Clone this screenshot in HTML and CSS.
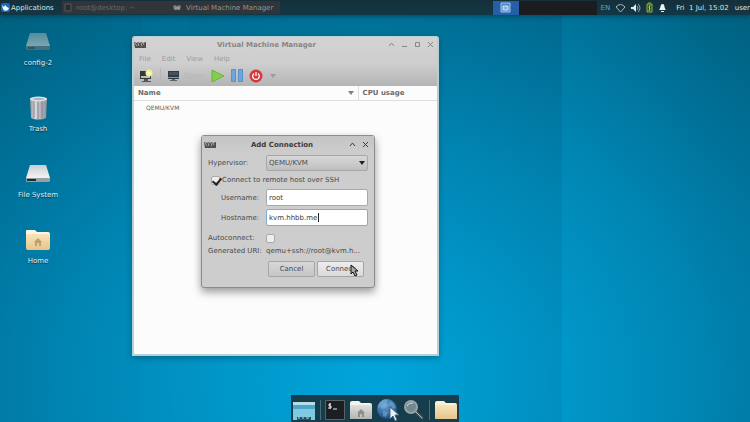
FILE: index.html
```html
<!DOCTYPE html>
<html lang="en">
<head>
<meta charset="utf-8">
<title>Desktop</title>
<link rel="stylesheet" href="styles.css">
</head>
<body>
<svg class="defs" aria-hidden="true">
  <defs>
    <linearGradient id="drive-light" x1="0" y1="0" x2="0" y2="1"><stop offset="0" stop-color="#c9cdd0"/><stop offset="1" stop-color="#f4f4f4"/></linearGradient>
    <linearGradient id="drive-dim" x1="0" y1="0" x2="0" y2="1"><stop offset="0" stop-color="#548d9d"/><stop offset="1" stop-color="#7ba6b2"/></linearGradient>
    <linearGradient id="can" x1="0" y1="0" x2="1" y2="0"><stop offset="0" stop-color="#8f929a"/><stop offset=".3" stop-color="#dcdde1"/><stop offset=".6" stop-color="#b4b6bd"/><stop offset="1" stop-color="#8f929a"/></linearGradient>
    <linearGradient id="folder-tan" x1="0" y1="0" x2="0" y2="1"><stop offset="0" stop-color="#f8e4bc"/><stop offset="1" stop-color="#e6c488"/></linearGradient>
    <linearGradient id="folder-grey" x1="0" y1="0" x2="0" y2="1"><stop offset="0" stop-color="#dfe0de"/><stop offset="1" stop-color="#b4b6b4"/></linearGradient>
    <radialGradient id="globe" cx=".4" cy=".3" r=".8"><stop offset="0" stop-color="#6aa5d8"/><stop offset="1" stop-color="#123f7c"/></radialGradient>
    <symbol id="vmm" viewBox="0 0 12 8"><path d="M0 1l3 1 1-1 2 1 1-1 2 1 3-1v6H1z" fill="#4c4c4c"/><path d="M1 2l2 3M4 2l1 3M7 2l1 3M9 2l1 2" stroke="#adadad"/><path d="M3 6h1M6 6h2M10 6h1" stroke="#8f5656"/></symbol>
    <symbol id="pointer" viewBox="0 0 9 13"><path d="M1 1v9l2-2 2 4 2-1-2-4h3z" stroke-width="1"/></symbol>
  </defs>
</svg>

<div class="desktop">
  <header class="panel">
    <button class="apps"><svg width="9" height="9" viewBox="0 0 9 9"><rect width="9" height="9" rx="2" fill="#1769bd"/><path d="M1 2l2 2 1-2 2 2 2 1-1 2-3 1-2-2z" fill="#fff"/></svg>Applications</button>
    <nav class="tasks" aria-label="Windows">
      <button class="task minimized"><svg width="8" height="10" viewBox="0 0 8 10"><path d="M1 1h6v7H1z" fill="#292c2e" stroke="#555b5e"/></svg>root@desktop: ~</button>
      <button class="task"><svg width="9" height="6" viewBox="0 0 9 6"><path d="M0 1l2-1 2 1 2-1 2 1-1 4H1z" fill="#777b7c"/><path d="M2 3h5" stroke="#afb1b1"/></svg>Virtual Machine Manager</button>
    </nav>
    <div class="workspaces">
      <span class="ws current"><svg width="11" height="11" viewBox="0 0 11 11"><path d="M1 1h9v9H1z" fill="#4c87c8" stroke="#a5c6e8"/><path d="M3 4h5v4H3z" fill="#87b2df" stroke="#d4e4f4"/></svg></span>
      <span class="ws"></span><span class="ws"></span><span class="ws"></span>
    </div>
    <div class="tray">
      <span class="lang">EN</span>
      <svg width="11" height="10" viewBox="0 0 11 10"><path d="M1 4q4.500-5 9 0L5.500 9z" fill="none" stroke="#a9b8bd"/></svg>
      <svg width="10" height="10" viewBox="0 0 10 10"><path d="M0 4h2l3-3v8L2 6H0z" fill="#e4e9ea"/><path d="M6 3q2 2 0 4M7 1q4 4 0 8" fill="none" stroke="#93a5aa"/></svg>
      <svg width="7" height="11" viewBox="0 0 7 11"><path d="M1 2h5v8H1z" fill="#2e4b23" stroke="#89b53c"/><path d="M2 1h3" stroke="#89b53c"/><path d="M4 3L3 6h1L3 9" fill="none" stroke="#b4db65"/></svg>
      <svg width="9" height="10" viewBox="0 0 9 10"><path d="M4 1h1c2 1 1 4 3 6H1c2-2 1-5 3-6z" fill="#f0f3f3"/><path d="M3 8.500h3" stroke="#f0f3f3"/></svg>
      <time>Fri &nbsp;1 Jul, 15:02</time>
      <span>user</span>
    </div>
  </header>

  <main class="workspace">
    <nav class="icons" aria-label="Desktop icons">
      <a href="#config"><svg width="26" height="24" viewBox="0 0 26 24"><path d="M5 3h16l4 13H1z" fill="url(#drive-dim)"/><path d="M1 16h24v3q0 1-2 1H3q-2 0-2-1z" fill="#456f7c"/><path d="M3 18h7" stroke="#23424c"/></svg>config-2</a>
      <a href="#trash"><svg width="26" height="24" viewBox="0 0 26 24"><path d="M5 2h17l-1 20q-8 3-15 0z" fill="url(#can)"/><path d="M9 5v17M13 5v18M17 5v17" stroke="#8c818c"/><ellipse cx="13.500" cy="3" rx="8.500" ry="2.500" fill="#d9e2e7"/><ellipse cx="13.500" cy="3" rx="6" ry="1.200" fill="#a6b7c1"/></svg>Trash</a>
      <a href="#filesystem"><svg width="26" height="24" viewBox="0 0 26 24"><path d="M5 3h16l4 13H1z" fill="url(#drive-light)"/><path d="M1 16h24v3q0 1-2 1H3q-2 0-2-1z" fill="#99a0a2"/><path d="M2 18h9" stroke="#242b2d" stroke-width="2"/></svg>File System</a>
      <a href="#home"><svg width="26" height="24" viewBox="0 0 26 24"><path d="M1 3q0-1 1-1h8l2 2h11q2 0 2 2v14H1z" fill="#fdf4e1"/><path d="M1 6h24v14q0 2-2 2H3q-2 0-2-2z" fill="url(#folder-tan)"/><path d="M13 10l4 4h-1v4h-2v-3h-2v3h-2v-4H9z" fill="#c0a068"/></svg>Home</a>
    </nav>
  </main>

  <section class="window manager" aria-label="Virtual Machine Manager">
    <div class="chrome">
      <div class="titlebar">
        <svg width="12" height="8"><use href="#vmm"/></svg>
        <h1>Virtual Machine Manager</h1>
        <div class="controls">
          <button aria-label="Shade"><svg width="7" height="7" viewBox="0 0 7 7"><path d="M1 5l2.500-3L6 5"/></svg></button>
          <button aria-label="Minimize"><svg width="7" height="7" viewBox="0 0 7 7"><path d="M1 5.500h5"/></svg></button>
          <button aria-label="Maximize"><svg width="7" height="7" viewBox="0 0 7 7"><path d="M1.500 1.500h4v4h-4z"/></svg></button>
          <button aria-label="Close"><svg width="7" height="7" viewBox="0 0 7 7"><path d="M1 1l5 5M6 1L1 6"/></svg></button>
        </div>
      </div>
      <nav class="menubar" aria-label="Menu"><button>File</button><button>Edit</button><button>View</button><button>Help</button></nav>
      <div class="toolbar">
        <button aria-label="New virtual machine"><svg width="14" height="14" viewBox="0 0 14 14"><path d="M1 2h11v8H1z" fill="#33383b"/><path d="M2 7h9v2H2z" fill="#b9bdbf"/><path d="M5 10h4v2h3v1H3v-1h2z" fill="#54585a"/><circle cx="10" cy="4" r="3.500" fill="#f1ee93"/><circle cx="10" cy="4" r="1.500" fill="#fffde0"/></svg></button>
        <span class="rule"></span>
        <button class="open" disabled><svg width="13" height="13" viewBox="0 0 13 13"><path d="M1 2h11v8H1z" fill="#2f3b47"/><path d="M2 3h9v3H2z" fill="#45525e"/><path d="M1 8h11v1H1z" fill="#8e969c"/><path d="M5 10h3v1h2v1H3v-1h2z" fill="#5f6568"/></svg>Open</button>
        <button class="run" aria-label="Run"><svg width="14" height="14" viewBox="0 0 14 14"><path d="M1 1l12 6-12 6z" fill="#81cf4b" stroke="#69b53c"/></svg></button>
        <button class="pause" aria-label="Pause"><svg width="12" height="13" viewBox="0 0 12 13"><path d="M.500.500h4v12h-4zM7.500.500h4v12h-4z" fill="#6ca5df" stroke="#5a90cb"/></svg></button>
        <button class="power" aria-label="Shut down"><svg width="14" height="14" viewBox="0 0 14 14"><circle cx="7" cy="7" r="6.500" fill="#d7373a"/><path d="M5 4.500a3.300 3.300 0 1 0 4 0M7 3v4" fill="none" stroke="#fff" stroke-width="1.300"/></svg></button>
        <button aria-label="Shut down options"><svg width="6" height="4" viewBox="0 0 6 4"><path d="M0 0h6L3 4z" fill="#9c9c9c"/></svg></button>
      </div>
    </div>
    <table class="list">
      <thead><tr><th><span class="sort">Name<svg width="6" height="4" viewBox="0 0 6 4"><path d="M0 0h6L3 4z" fill="#808080"/></svg></span></th><th class="cpu">CPU usage</th></tr></thead>
      <tbody><tr><td>QEMU/KVM</td><td></td></tr></tbody>
    </table>
  </section>

  <form class="window dialog" aria-label="Add Connection">
    <div class="titlebar">
      <svg width="12" height="8"><use href="#vmm"/></svg>
      <h2>Add Connection</h2>
      <div class="controls">
        <button type="button" aria-label="Shade"><svg width="7" height="7" viewBox="0 0 7 7"><path d="M1 5l2.500-3L6 5"/></svg></button>
        <button type="button" aria-label="Close"><svg width="7" height="7" viewBox="0 0 7 7"><path d="M1 1l5 5M6 1L1 6"/></svg></button>
      </div>
    </div>
    <div class="fields">
      <label for="hypervisor">Hypervisor:</label>
      <div class="combo"><select id="hypervisor"><option>QEMU/KVM</option></select><svg width="6" height="4" viewBox="0 0 6 4"><path d="M0 0h6L3 4z" fill="#222"/></svg></div>
      <label class="wide"><input type="checkbox" checked>Connect to remote host over SSH</label>
      <label class="indent" for="username">Username:</label>
      <input type="text" id="username" value="root">
      <label class="indent" for="hostname">Hostname:</label>
      <div class="entry"><input class="focused" type="text" id="hostname" value="kvm.hhbb.me"><span class="caret"></span></div>
      <label class="auto" for="autoconnect">Autoconnect:</label>
      <input class="auto" type="checkbox" id="autoconnect">
      <span class="uri">Generated URI:</span>
      <output class="uri">qemu+ssh://root@kvm.h...</output>
    </div>
    <div class="actions">
      <button type="button">Cancel</button>
      <button type="button" class="hover">Connect</button>
      <svg class="cursor" width="9" height="13" fill="#aaa" stroke="#111"><use href="#pointer"/></svg>
    </div>
  </form>

  <footer class="dock">
    <a href="#show" aria-label="Show desktop"><svg width="24" height="22" viewBox="0 0 24 22"><path d="M1 3h22v18H1z" fill="#7fc9e3"/><path d="M1 3h22v3H1z" fill="#b9dbe5"/><path d="M1 6h22v4H1z" fill="#4ba6cb"/><path d="M5 18h14v3H5z" fill="#234f5f"/><path d="M6 19h2M10 19h2M14 19h3" stroke="#bce0e9"/></svg></a>
    <span class="rule"></span>
    <a href="#terminal" aria-label="Terminal"><svg width="20" height="20" viewBox="0 0 20 20"><path d="M.500.500h19v19H.500z" fill="#1b1e22" stroke="#5a6265"/><path d="M6 4H4v2h2v2H3M5 3v6M8 9h4" fill="none" stroke="#e5e7e8"/></svg></a>
    <a href="#files" aria-label="Files"><svg width="24" height="20" viewBox="0 0 24 20"><path d="M1 3q0-2 2-2h7l2 2h9q2 0 2 2v14H1z" fill="#f2f2f1"/><path d="M1 5h22v14H1z" fill="url(#folder-grey)"/><path d="M12 9l4 4h-1v4h-2v-3h-2v3H9v-4H8z" fill="#8d8f8d"/></svg></a>
    <a class="web" href="#web" aria-label="Web browser"><svg width="22" height="24" viewBox="0 0 22 24"><circle cx="10" cy="11" r="10" fill="url(#globe)"/><path d="M3 4q4-4 8-2l-2 3 2 2-3 3-3 1-2-2-2 1q0-4 2-6zM13 3q5 2 6 7l-3 1-2-3-2-1zM6 13l5 1-2 5-3-1z" fill="#84b4d6" opacity=".5"/><path d="M13 9v12l3-3 2 5 2-1-2-5h4z" fill="#edf3f5" stroke="#3d6680"/></svg></a>
    <a href="#search" aria-label="Application finder"><svg width="22" height="22" viewBox="0 0 22 22"><path d="M12 12l7 7" stroke="#4b5a5e" stroke-width="3" stroke-linecap="round"/><path d="M12 12l7 7" stroke="#a9b2b4"/><circle cx="8" cy="8" r="6" fill="#71898f" stroke="#94a5a9" stroke-width="2"/><path d="M4 7q2-4 6-3" fill="none" stroke="#dbe4e5"/></svg></a>
    <span class="rule"></span>
    <a href="#folder" aria-label="Folder"><svg width="24" height="20" viewBox="0 0 24 20"><path d="M1 3q0-2 2-2h7l2 2h9q2 0 2 2v14H1z" fill="#fbf0d5"/><path d="M1 5h22v14H1z" fill="url(#folder-tan)"/></svg></a>
  </footer>
</div>
</body>
</html>
```
FILE: styles.css
```css
* {
  box-sizing: border-box;
}

body {
  margin: 0;
  font: 7px/10px "DejaVu Sans", sans-serif;
  color: #4a4a4a;
}

button,
input,
select {
  font: inherit;
  color: inherit;
  margin: 0;
  padding: 0;
  border: 0;
  background: none;
}

svg {
  display: block;
  flex: none;
}

a {
  color: inherit;
  text-decoration: none;
}

h1,
h2 {
  margin: 0;
  font: inherit;
}

.defs {
  position: absolute;
  width: 0;
  height: 0;
}

.desktop {
  position: relative;
  display: flex;
  flex-direction: column;
  min-height: 100vh;
  overflow: hidden;
  background:
    linear-gradient(90deg, transparent 19%, #00a0d00c 19%, #00a0d00c 25%, transparent 25%),
    linear-gradient(90deg, transparent 50%, #00406012 75%, transparent 75%),
    linear-gradient(90deg, transparent 75%, #00b0e01c 75%, transparent 95%),
    radial-gradient(ellipse 84% 118% at 51% 90%, #00a5dc 0%, #0097c9 25%, #0083b0 52%, #006f96 75%, #005c78 100%);
}

/* Top panel */
.panel {
  display: flex;
  align-items: center;
  height: 15px;
  color: #dce4e6;
  background: linear-gradient(#152f3b, #123845);
  box-shadow: 0 1px 5px #002b3899;
}

.apps {
  display: flex;
  align-items: center;
  gap: 1px;
  width: 62px;
  padding-left: 1px;
}

.tasks {
  display: flex;
  height: 13px;
  color: #909698;
  background: #303539;
}

.task {
  display: flex;
  align-items: center;
  gap: 4px;
  width: 109px;
  padding-left: 2px;
  white-space: nowrap;
}

.task.minimized {
  color: #626a6d;
}

.workspaces {
  display: flex;
  height: 14px;
  margin-left: auto;
  background: #1a1c1e;
}

.ws {
  display: grid;
  place-items: center;
  width: 26px;
}

.ws.current {
  background: #245fa8;
}

.tray {
  display: flex;
  align-items: center;
  gap: 5px;
  margin-left: 4px;
  white-space: nowrap;
}

.lang {
  color: #5aa6c8;
}

.tray time {
  margin: 0 1px 0 4px;
}

/* Desktop icons */
.workspace {
  flex: 1;
}

.icons {
  display: flex;
  flex-direction: column;
  gap: 28px;
  width: 76px;
  padding-top: 15px;
}

.icons a {
  display: flex;
  flex-direction: column;
  align-items: center;
  gap: 4px;
  color: #e6eff2;
  text-shadow: 0 1px 1px #003040;
}

/* Windows */
.window {
  position: absolute;
}

.manager {
  left: 132px;
  top: 36px;
  width: 307px;
  height: 320px;
  border: 1px solid #b7d0d4;
  border-width: 1px 2px 2px;
  border-radius: 3px 3px 0 0;
  background: #fcfcfc;
  box-shadow: 0 2px 6px #00304066;
}

.chrome {
  color: #9c9c9c;
  background: linear-gradient(#d3d3d3, #cecece 55%, #b4b4b4);
}

.titlebar {
  display: grid;
  grid-template-columns: 16px 1fr 54px;
  align-items: center;
  height: 15px;
  font-weight: bold;
  text-align: center;
}

.manager .titlebar {
  color: #868686;
}

.controls {
  display: flex;
  justify-content: flex-end;
  gap: 6px;
  padding-right: 3px;
}

.controls svg {
  fill: none;
  stroke: currentColor;
}

.menubar {
  display: flex;
  gap: 11px;
  height: 13px;
  padding-left: 5px;
}

.toolbar {
  display: flex;
  align-items: center;
  height: 21px;
  padding-left: 5px;
}

.toolbar .rule {
  height: 16px;
  margin: 0 6px 0 7px;
  border-left: 1px solid #b5b5b5;
}

.open {
  display: flex;
  align-items: center;
  gap: 4px;
  color: #b5b5b5;
}

.run {
  margin: 0 6px 0 8px;
}

.power {
  margin: 0 7px 0 6px;
}

.list {
  width: 100%;
  border-collapse: collapse;
  table-layout: fixed;
}

.list th {
  height: 14px;
  padding: 0 4px;
  border-bottom: 1px solid #dedede;
  color: #6c6c6c;
  text-align: left;
}

.list .cpu {
  width: 79px;
  border-left: 1px solid #dedede;
}

.sort {
  display: flex;
  align-items: center;
  justify-content: space-between;
}

.list td {
  padding: 2px 12px;
  font-size: 6px;
  color: #606060;
}

/* Add Connection */
.dialog {
  left: 201px;
  top: 135px;
  width: 174px;
  border: 1px solid #8c8c8c;
  border-radius: 3px;
  background: #cdcdcd;
  box-shadow: 0 4px 9px #00000066;
}

.dialog .titlebar {
  grid-template-columns: 16px 1fr 28px;
  height: 17px;
  padding: 0 2px;
  background: linear-gradient(#c4c4c4, #cdcdcd);
  color: #3b3b3b;
}

.fields {
  display: grid;
  grid-template-columns: 58px 1fr;
  align-items: center;
  padding: 2px 6px 0;
  row-gap: 3px;
}

.combo {
  position: relative;
}

.combo select {
  display: block;
  width: 100%;
  height: 16px;
  padding: 0 2px;
  appearance: none;
  border: 1px solid #a7a7a7;
  border-radius: 2px;
  background: linear-gradient(#d8d8d8, #bfbfbf);
}

.combo svg {
  position: absolute;
  right: 3px;
  top: 6px;
  pointer-events: none;
}

.wide {
  grid-column: 1 / -1;
  display: flex;
  align-items: center;
  gap: 2px;
  height: 12px;
  padding-left: 3px;
}

.indent {
  padding-left: 13px;
}

.entry {
  position: relative;
}

input[type="text"] {
  display: block;
  width: 100%;
  height: 17px;
  padding: 0 2px;
  border: 1px solid #a9a9a9;
  border-radius: 2px;
  background: #fff;
  color: #3a3a3a;
}

input[type="text"].focused {
  border-color: #82acd0;
}

.caret {
  position: absolute;
  left: 52px;
  top: 4px;
  height: 9px;
  border-left: 1px solid #222;
}

input[type="checkbox"] {
  width: 9px;
  height: 9px;
  appearance: none;
  border: 1px solid #aaa;
  border-radius: 2px;
  background: #eee;
}

input[type="checkbox"]:checked::after {
  content: "";
  display: block;
  width: 4px;
  height: 7px;
  margin: -1px 0 0 2px;
  border: solid #222;
  border-width: 0 2px 2px 0;
  transform: rotate(40deg);
}

.auto {
  margin-top: 4px;
}

.uri {
  white-space: nowrap;
}

.actions {
  position: relative;
  display: flex;
  justify-content: flex-end;
  gap: 2px;
  padding: 5px 10px 10px;
}

.actions button {
  width: 47px;
  height: 16px;
  border: 1px solid #a5a5a5;
  border-radius: 2px;
  background: linear-gradient(#d8d8d8, #c5c5c5);
}

.actions .hover {
  background: linear-gradient(#ededed, #dadada);
}

.cursor {
  position: absolute;
  right: 15px;
  top: 8px;
}

/* Dock */
.dock {
  display: flex;
  align-items: center;
  align-self: center;
  gap: 4px;
  height: 27px;
  padding: 2px 1px 0;
  background: #153d4b;
}

.dock .rule {
  height: 20px;
  border-left: 1px solid #4c6d77;
}
```
